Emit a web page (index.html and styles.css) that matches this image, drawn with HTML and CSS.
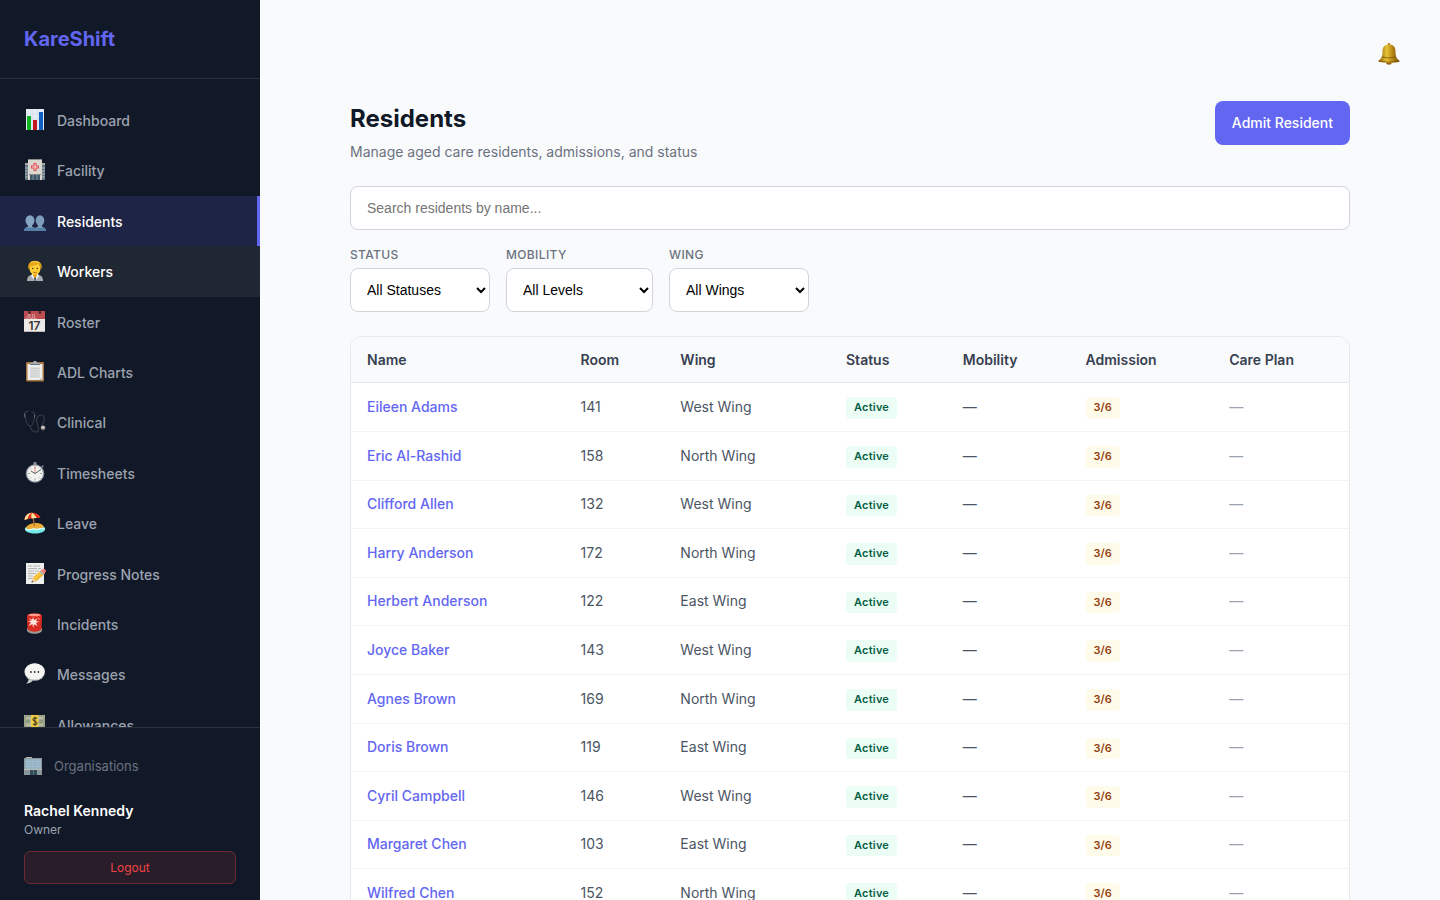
FILE: index.html
```html
<!DOCTYPE html>
<html lang="en">
<head>
    <meta charset="UTF-8">
    <meta name="viewport" content="width=device-width, initial-scale=1.0">
    <title>Residents - KareShift</title>
    <link rel="stylesheet" href="styles.css">
</head>
<body>
<div class="app">
    <aside class="sidebar">
        <div class="brand">KareShift</div>
        <nav class="nav">
            <a href="#" class="nav-link">
                <svg class="icon" viewBox="0 0 22 22"><rect x="2" y="0" width="18" height="21" fill="#e6edf7"/><path d="M2 5h18M2 10h18M2 15h18M8 0v21M14 0v21" stroke="#cbd6e6" stroke-width=".5"/><rect x="3" y="7" width="4" height="14" fill="#0db41e"/><rect x="9" y="11" width="4" height="10" fill="#c01722"/><rect x="15" y="3" width="4" height="18" fill="#1260c4"/></svg>
                Dashboard
            </a>
            <a href="#" class="nav-link">
                <svg class="icon" viewBox="0 0 22 22"><rect x="1" y="4" width="20" height="17" fill="#a9a79f"/><rect x="1" y="6" width="4" height="15" fill="#61788a"/><rect x="17" y="6" width="4" height="15" fill="#61788a"/><path d="M1 9h4M1 12h4M1 15h4M1 18h4M17 9h4M17 12h4M17 15h4M17 18h4" stroke="#b5b6b0"/><rect x="4" y="0" width="14" height="21" fill="#d8d6cf"/><path d="M4 0h14v1H4z" fill="#8c8a84"/><path d="M11 4v8M7 8h8" stroke="#e04a50" stroke-width="3"/><path d="M11 5v6M8 8h6" stroke="#f7d9d8" stroke-width="1"/><rect x="6" y="16" width="10" height="5" fill="#3f586c"/><path d="M5 15.500h12" stroke="#8c8a84"/><path d="M9 16v5M13 16v5" stroke="#8fa3b0" stroke-width=".7"/></svg>
                Facility
            </a>
            <a href="#" class="nav-link active">
                <svg class="icon" viewBox="0 0 22 22"><g fill="#7c9cba"><ellipse cx="16" cy="10.500" rx="4.300" ry="5.200"/><path d="M10 21c0-3 3-3.500 4-4.500v-3h4v3c1 1 4 1 4 4.500z"/></g><g fill="#86a5c1"><ellipse cx="6" cy="10.500" rx="4.500" ry="5.200"/><path d="M0 21c0-3 3-3.500 4-4.500v-3h4v3c1 1 4.500 1 4.500 4.500z"/></g><path d="M0 21c0-2 1-3 2-3.500h8c1.500.5 2.200 1.500 2.500 3.500zM13 21l-1-3h8c1 .5 2 1.500 2 3z" fill="#557fa6"/></svg>
                Residents
            </a>
            <a href="#" class="nav-link hover">
                <svg class="icon" viewBox="0 0 22 22"><path d="M3 21c0-4 2-6 5-6h6c3 0 5 2 5 6z" fill="#a8acb1"/><path d="M8 14h6l1 2-4 5-4-5z" fill="#f4f5f6"/><path d="M9 12h4v4l-2 2-2-2z" fill="#eaa51c"/><path d="M11 17l-1 1 .5 3h1l.5-3z" fill="#39424c"/><ellipse cx="11" cy="8.500" rx="5.500" ry="6.300" fill="#ffcf38"/><path d="M4.500 9C3.500 4 6 .8 11 .8S18.500 4 17.500 9l-1-.5c0-2-.5-3.500-2-4.500-3 2-6 1.500-8 2l-1 3z" fill="#e6a51b"/><path d="M7 2.500c3-1.500 6-1 8 .5" stroke="#fbd253" fill="none"/><circle cx="8.700" cy="8.500" r=".8" fill="#55380d"/><circle cx="13.300" cy="8.500" r=".8" fill="#55380d"/><path d="M9 12q2 1.500 4 0" stroke="#a95b16" fill="none" stroke-width=".8"/></svg>
                Workers
            </a>
            <a href="#" class="nav-link">
                <svg class="icon" viewBox="0 0 22 22"><rect x="0" y="0" width="21" height="21" fill="#ece9e7"/><rect x="0" y="0" width="21" height="8" fill="#bb4c50"/><path d="M0 20.500h21" stroke="#b9b6b4"/><circle cx="5.500" cy="1.500" r="1.300" fill="#481c22"/><circle cx="16" cy="1.500" r="1.300" fill="#481c22"/><path d="M4.500 0l1 2M15 0l1 2" stroke="#2b3038"/><text x="1.500" y="7.500" class="cal-month">JUL</text><text x="10.500" y="19" class="cal-day">17</text></svg>
                Roster
            </a>
            <a href="#" class="nav-link">
                <svg class="icon" viewBox="0 0 22 22"><rect x="2" y="1" width="18" height="19.500" rx="1" fill="#a5753f"/><path d="M3.500 3h15v16h-15z" fill="#eeeeed"/><path d="M6 6h10v11H6z" fill="#dcdddd"/><path d="M6.500 7.500h9M6.500 10h9M6.500 12.500h9M6.500 15h9" stroke="#c8cbcc" stroke-width=".7"/><path d="M15 19l3.500-3.500V19z" fill="#c7c8c7"/><path d="M6 4V2h3c0-3 4-3 4 0h3v2z" fill="#a7b0b8"/><path d="M6 3.500h10" stroke="#687583"/></svg>
                ADL Charts
            </a>
            <a href="#" class="nav-link">
                <svg class="icon" viewBox="0 0 22 22"><g fill="none" stroke-linecap="round"><path d="M4 .6C1 0 0 2 1 6c1 5 2 9 5 9s4-5 4.500-9C11 3 10 .5 7.500 1M6 15c1 4 3 6 6 6 4 0 2-5 1-9-1-5 1-8 4-8s4 3 3 6-4 5-1 7" stroke="#343b43" stroke-width="1.200"/><path d="M1 6L.6 3M10.500 6l.2-2" stroke="#68707a"/></g><circle cx="19" cy="17" r="2.400" fill="#898a8b"/><circle cx="19" cy="16.500" r="1.400" fill="#d8cfc8"/><path d="M17 18q2 2 4 0" stroke="#584c48" fill="none"/></svg>
                Clinical
            </a>
            <a href="#" class="nav-link">
                <svg class="icon" viewBox="0 0 22 22"><rect x="9.500" y="0" width="3" height="4" rx=".8" fill="#8b949b"/><path d="M17 6l2.500-2.500" stroke="#78838c" stroke-width="1.500"/><circle cx="11" cy="11.500" r="9.300" fill="#8d979f"/><circle cx="11" cy="11.500" r="8" fill="#f2f2ef"/><path d="M11 4.500v2M11 16.500v2M4 11.500h2M16 11.500h2M6 6.500l1 1M16 16.500l-1-1M6 16.500l1-1" stroke="#8a8f92" stroke-width=".8"/><path d="M11 11.500v-7" stroke="#ed7467" stroke-width=".8"/><path d="M7 9l4 2.500 6-4" stroke="#45535c" fill="none" stroke-width=".9"/></svg>
                Timesheets
            </a>
            <a href="#" class="nav-link">
                <svg class="icon" viewBox="0 0 22 22"><path d="M1 16c2-3 17-5 20 0 1 3-3 5.500-10 5.500S0 19 1 16z" fill="#73e7e6"/><path d="M2 16c2-6 16-7 18-1-2 2-3 0-5 1.500s-4-.5-6 .5-5 1-7-1z" fill="#eaaa33"/><path d="M1.500 17c3 2 6 0 8 0s4 1 6 0 3 0 5-.5" stroke="#dbfffa" stroke-width="1.500" fill="none"/><path d="M9 5l1.500 9" stroke="#a9693a" stroke-width="1.300"/><path d="M.5 8C1 3 4 .8 8 .8s8 2 8.500 5C12 6 5 6.500.5 8z" fill="#e43622"/><path d="M3.500 7C4 4 6 1.500 8 .8 4 1 1 3.500.5 8zM8 .8c2 1 3.500 3 4.500 5.200l-5 .5C7 4 7.500 2 8 .8z" fill="#f8e59b"/></svg>
                Leave
            </a>
            <a href="#" class="nav-link">
                <svg class="icon" viewBox="0 0 22 22"><path d="M2 0h18v21H2z" fill="#eeeeec"/><path d="M4 3h4M9 3h7M4 5.500h9M14 5.500h3M4 8h6M11 8h4M4 10.500h8M4 13h5M4 15.500h4" stroke="#a3a6a8" stroke-width=".8"/><path d="M7.500 19.500l1.500-5 8.500-7.500 3.500 3.500-8.500 7.500z" fill="#f5b92d"/><path d="M9 14.500l3.500 3.500-5 1.500z" fill="#efce9c"/><path d="M7.500 19.500l.6-1.800 1.300 1.300z" fill="#373737"/><path d="M10.500 15.500l8-7" stroke="#ffdc65"/><path d="M16.500 8L19 5.800c1-.8 3.500 1.500 2.800 2.600L20 11z" fill="#ef8582"/><path d="M16 8.500l3.500 3.500" stroke="#9dbbc9" stroke-width="1.500"/></svg>
                Progress Notes
            </a>
            <a href="#" class="nav-link">
                <svg class="icon" viewBox="0 0 22 22"><path d="M3 15h15v2c0 5-15 5-15 0z" fill="#9c9996"/><path d="M3 2.500c2-3 13-3 15 0L17.500 16c-2 3.500-12 3.500-14 0z" fill="#d82c22"/><ellipse cx="10.500" cy="2" rx="6" ry="1.300" fill="#ff9c8c"/><path d="M9 4l1 3L13.500 5.500 12 8l3.500.8-3.500 1 1.500 3.500-3.200-2L9 15l-.5-4-4 2L7 9.500 3.500 8.500 7 8 5 5l3 2z" fill="#ffe3dc"/><path d="M14 4.500l1.500 2" stroke="#ffa293"/></svg>
                Incidents
            </a>
            <a href="#" class="nav-link">
                <svg class="icon" viewBox="0 0 22 22"><path d="M2 20.500c2-1 2.500-3 2.500-4.500L9 17c-1 2.500-4 3.500-7 3.500z" fill="#c7c9ca"/><ellipse cx="10.700" cy="9" rx="10.300" ry="8.700" fill="#c4c5c5"/><ellipse cx="10.700" cy="8.500" rx="9.800" ry="8" fill="#f5f5f4"/><circle cx="7" cy="9" r=".9" fill="#333"/><circle cx="10.700" cy="9" r=".9" fill="#333"/><circle cx="14.400" cy="9" r=".9" fill="#333"/></svg>
                Messages
            </a>
            <a href="#" class="nav-link">
                <svg class="icon" viewBox="0 0 22 22"><rect x="0" y="1" width="21" height="13" fill="#b9bca0"/><path d="M1 2h19v11H1z" fill="none" stroke="#708065" stroke-width=".8"/><circle cx="4" cy="7.500" r="2.200" fill="#8d9a80"/><circle cx="17" cy="7.500" r="2.200" fill="#8d9a80"/><path d="M0 14h21v7H0z" fill="#83967b"/><rect x="7" y="1" width="7.500" height="20" fill="#f0cb45"/><path d="M13 4.500c-1-1-4-1-4 1s4 1.500 4 3.500-3 2-4 .8M11 2.500v9.500" stroke="#514720" stroke-width="1.200" fill="none"/></svg>
                Allowances
            </a>
        </nav>
        <div class="sidebar-footer">
            <a href="#" class="org-link">
                <svg class="icon-sm" viewBox="0 0 18 18"><rect x="0" y="1" width="18" height="17" fill="#8f9898"/><path d="M2 0h6v1H2z" fill="#b7b6ae"/><path d="M1 2h16v10H1z" fill="#91b0c3"/><path d="M1 4.500h16M1 7h16M1 9.500h16M3.500 2v10M6 2v10M8.500 2v10M11 2v10M13.500 2v10M16 2v10" stroke="#a9c0cc" stroke-width=".5"/><path d="M0 12.500h18" stroke="#c0bcae"/><rect x="6" y="13" width="7" height="5" fill="#304d5f"/><path d="M1 14h4v3H1zM14 14h3v3h-3z" fill="#8597a0"/><path d="M9.500 13v5" stroke="#6f8896" stroke-width=".6"/></svg>
                Organisations
            </a>
            <div class="user-name">Rachel Kennedy</div>
            <div class="user-role">Owner</div>
            <button type="button" class="logout">Logout</button>
        </div>
    </aside>

    <main class="main">
        <div class="topbar">
            <button type="button" class="bell" aria-label="Notifications">
                <svg viewBox="0 0 22 22">
                    <defs>
                        <linearGradient id="gold"><stop offset="0" stop-color="#8a6210"/><stop offset=".4" stop-color="#e6c236"/><stop offset=".65" stop-color="#b98a14"/><stop offset="1" stop-color="#6f4c0a"/></linearGradient>
                    </defs>
                    <circle cx="11" cy="1.400" r="1.300" fill="#b18419"/>
                    <ellipse cx="11" cy="19.800" rx="2.800" ry="1.900" fill="#9b5f12"/>
                    <path d="M11 1.500c-5 0-6.500 3-6.500 7 0 5-1 7-4.300 9.500-.5 2.500 21.500 2.500 21.500 0C18.500 15.500 17.500 13.500 17.500 8.500c0-4-1.500-7-6.500-7z" fill="url(#gold)"/>
                    <path d="M4 14q7 2 14 0M.8 18q10 2.500 20.400 0" stroke="#805607" stroke-width=".8" fill="none"/>
                </svg>
            </button>
        </div>
        <div class="content">
            <header class="page-header">
                <div>
                    <h1>Residents</h1>
                    <p>Manage aged care residents, admissions, and status</p>
                </div>
                <button type="button" class="btn-primary">Admit Resident</button>
            </header>

            <input type="text" class="search" placeholder="Search residents by name..." aria-label="Search residents by name">

            <div class="filters">
                <div class="filter">
                    <label for="status">Status</label>
                    <select id="status"><option>All Statuses</option><option>Active</option></select>
                </div>
                <div class="filter mobility">
                    <label for="mobility">Mobility</label>
                    <select id="mobility"><option>All Levels</option></select>
                </div>
                <div class="filter">
                    <label for="wing">Wing</label>
                    <select id="wing"><option>All Wings</option><option>East Wing</option><option>North Wing</option><option>West Wing</option></select>
                </div>
            </div>

            <div class="table-card">
                <table>
                    <thead>
                        <tr>
                            <th class="col-name">Name</th>
                            <th class="col-room">Room</th>
                            <th class="col-wing">Wing</th>
                            <th class="col-status">Status</th>
                            <th class="col-mobility">Mobility</th>
                            <th class="col-admission">Admission</th>
                            <th>Care Plan</th>
                        </tr>
                    </thead>
                    <tbody>
                        <tr><td><a href="#">Eileen Adams</a></td><td>141</td><td>West Wing</td><td><span class="badge">Active</span></td><td>—</td><td><span class="badge steps">3/6</span></td><td class="muted">—</td></tr>
                        <tr><td><a href="#">Eric Al-Rashid</a></td><td>158</td><td>North Wing</td><td><span class="badge">Active</span></td><td>—</td><td><span class="badge steps">3/6</span></td><td class="muted">—</td></tr>
                        <tr><td><a href="#">Clifford Allen</a></td><td>132</td><td>West Wing</td><td><span class="badge">Active</span></td><td>—</td><td><span class="badge steps">3/6</span></td><td class="muted">—</td></tr>
                        <tr><td><a href="#">Harry Anderson</a></td><td>172</td><td>North Wing</td><td><span class="badge">Active</span></td><td>—</td><td><span class="badge steps">3/6</span></td><td class="muted">—</td></tr>
                        <tr><td><a href="#">Herbert Anderson</a></td><td>122</td><td>East Wing</td><td><span class="badge">Active</span></td><td>—</td><td><span class="badge steps">3/6</span></td><td class="muted">—</td></tr>
                        <tr><td><a href="#">Joyce Baker</a></td><td>143</td><td>West Wing</td><td><span class="badge">Active</span></td><td>—</td><td><span class="badge steps">3/6</span></td><td class="muted">—</td></tr>
                        <tr><td><a href="#">Agnes Brown</a></td><td>169</td><td>North Wing</td><td><span class="badge">Active</span></td><td>—</td><td><span class="badge steps">3/6</span></td><td class="muted">—</td></tr>
                        <tr><td><a href="#">Doris Brown</a></td><td>119</td><td>East Wing</td><td><span class="badge">Active</span></td><td>—</td><td><span class="badge steps">3/6</span></td><td class="muted">—</td></tr>
                        <tr><td><a href="#">Cyril Campbell</a></td><td>146</td><td>West Wing</td><td><span class="badge">Active</span></td><td>—</td><td><span class="badge steps">3/6</span></td><td class="muted">—</td></tr>
                        <tr><td><a href="#">Margaret Chen</a></td><td>103</td><td>East Wing</td><td><span class="badge">Active</span></td><td>—</td><td><span class="badge steps">3/6</span></td><td class="muted">—</td></tr>
                        <tr><td><a href="#">Wilfred Chen</a></td><td>152</td><td>North Wing</td><td><span class="badge">Active</span></td><td>—</td><td><span class="badge steps">3/6</span></td><td class="muted">—</td></tr>
                    </tbody>
                </table>
            </div>
        </div>
    </main>
</div>
</body>
</html>
```
FILE: styles.css
```css
*{
    margin: 0;
    padding: 0;
    box-sizing: border-box;
}
body{
    font-family: Inter, sans-serif;
    font-size: 14px;
    line-height: 1.6;
    color: #4b5563;
    background-color: #f9fafc;
}
a{
    text-decoration: none;
}
.app{
    display: flex;
    height: 100vh;
    overflow: hidden;
}

/* sidebar */
.sidebar{
    width: 260px;
    flex-shrink: 0;
    display: flex;
    flex-direction: column;
    background-color: #111827;
}
.brand{
    padding: 24px;
    font-size: 20px;
    line-height: 30px;
    font-weight: 700;
    color: #6366f1;
    border-bottom: 1px solid #293040;
}
.nav{
    flex: 1;
    min-height: 0;
    overflow: hidden;
    padding: 16px 0;
}
.nav-link{
    display: flex;
    align-items: flex-start;
    gap: 11px;
    padding: 15px 24px 13px;
    font-weight: 500;
    color: #9ca3af;
}
.nav-link.active{
    color: #fff;
    background-color: #1d2445;
    border-right: 3px solid #6366f1;
}
.nav-link:hover, .nav-link.hover{
    color: #fff;
}
.nav-link.hover{
    background-color: #1f2733;
}
.icon{
    width: 22px;
    height: 22px;
    margin-top: -1px;
}
.cal-month{
    font-size: 6px;
    font-weight: 600;
    fill: #e0a9a9;
}
.cal-day{
    font-size: 12px;
    font-weight: 600;
    text-anchor: middle;
    fill: #333;
}
.sidebar-footer{
    padding: 16px 24px;
    border-top: 1px solid #293040;
}
.org-link{
    display: flex;
    align-items: center;
    gap: 12px;
    padding: 12px 0;
    margin-bottom: 12px;
    font-size: 13px;
    line-height: 20px;
    color: #6b7280;
}
.icon-sm{
    width: 18px;
    height: 18px;
}
.user-name{
    font-weight: 600;
    line-height: 21px;
    color: #fff;
}
.user-role{
    font-size: 12px;
    line-height: 18px;
    color: #9ca3af;
}
.logout{
    width: 100%;
    height: 33px;
    margin-top: 12px;
    font-family: Inter, sans-serif;
    font-size: 12px;
    color: #ef4444;
    background-color: #2a1d2a;
    border: 1px solid #6d2933;
    border-radius: 6px;
}

/* page */
.main{
    flex: 1;
    padding: 32px 40px;
    overflow: hidden;
}
.topbar{
    display: flex;
    justify-content: flex-end;
    height: 69px;
    padding-top: 11px;
}
.bell{
    width: 22px;
    height: 22px;
    background: none;
    border: none;
}
.content{
    max-width: 1000px;
    margin: 0 auto;
}
.page-header{
    display: flex;
    justify-content: space-between;
    align-items: flex-start;
    margin-bottom: 23px;
}
h1{
    font-size: 24px;
    line-height: 36px;
    font-weight: 700;
    color: #111827;
    margin-bottom: 4px;
}
.page-header p{
    color: #6b7280;
}
.btn-primary{
    height: 44px;
    padding: 0 17px 2px;
    font-family: Inter, sans-serif;
    font-size: 14px;
    font-weight: 500;
    color: #fff;
    background-color: #6366f1;
    border: none;
    border-radius: 8px;
}
.search, select{
    display: block;
    width: 100%;
    height: 44px;
    font-family: "Liberation Sans", Arial, sans-serif;
    font-size: 14px;
    background-color: #fff;
    border: 1px solid #d1d5db;
    border-radius: 8px;
}
.search{
    padding: 0 16px;
    margin-bottom: 16px;
}
.filters{
    display: flex;
    gap: 16px;
    margin-bottom: 24px;
}
.filter{
    width: 140px;
}
.filter.mobility{
    width: 147px;
}
.filter label{
    display: block;
    font-size: 12px;
    line-height: 18px;
    font-weight: 500;
    letter-spacing: 0.03em;
    text-transform: uppercase;
    color: #6b7280;
    margin-bottom: 4px;
}
select{
    padding: 0 0 0 12px;
    color: #000;
}

/* table */
.table-card{
    background-color: #fff;
    border: 1px solid #e5e7eb;
    border-radius: 12px;
    overflow: hidden;
}
table{
    width: 100%;
    table-layout: fixed;
    border-collapse: collapse;
}
th{
    padding: 12px 16px;
    text-align: left;
    font-weight: 600;
    line-height: 21px;
    color: #374151;
    background-color: #f9fafb;
    border-bottom: 1px solid #e5e7eb;
}
td{
    padding: 12px 16px;
    border-bottom: 1px solid #f3f4f6;
}
td a{
    font-weight: 500;
    color: #6366f1;
}
.col-name{
    width: 21.4%;
}
.col-room{
    width: 10%;
}
.col-wing{
    width: 16.6%;
}
.col-status{
    width: 11.7%;
}
.col-mobility{
    width: 12.3%;
}
.col-admission{
    width: 14.4%;
}
.badge{
    display: inline-block;
    padding: 2px 8px;
    font-size: 11px;
    font-weight: 600;
    letter-spacing: 0.02em;
    color: #065f46;
    background-color: #ecfdf5;
    border-radius: 4px;
}
.badge.steps{
    letter-spacing: 0;
    color: #92400e;
    background-color: #fffbeb;
}
.muted{
    color: #9ca3af;
}
```
